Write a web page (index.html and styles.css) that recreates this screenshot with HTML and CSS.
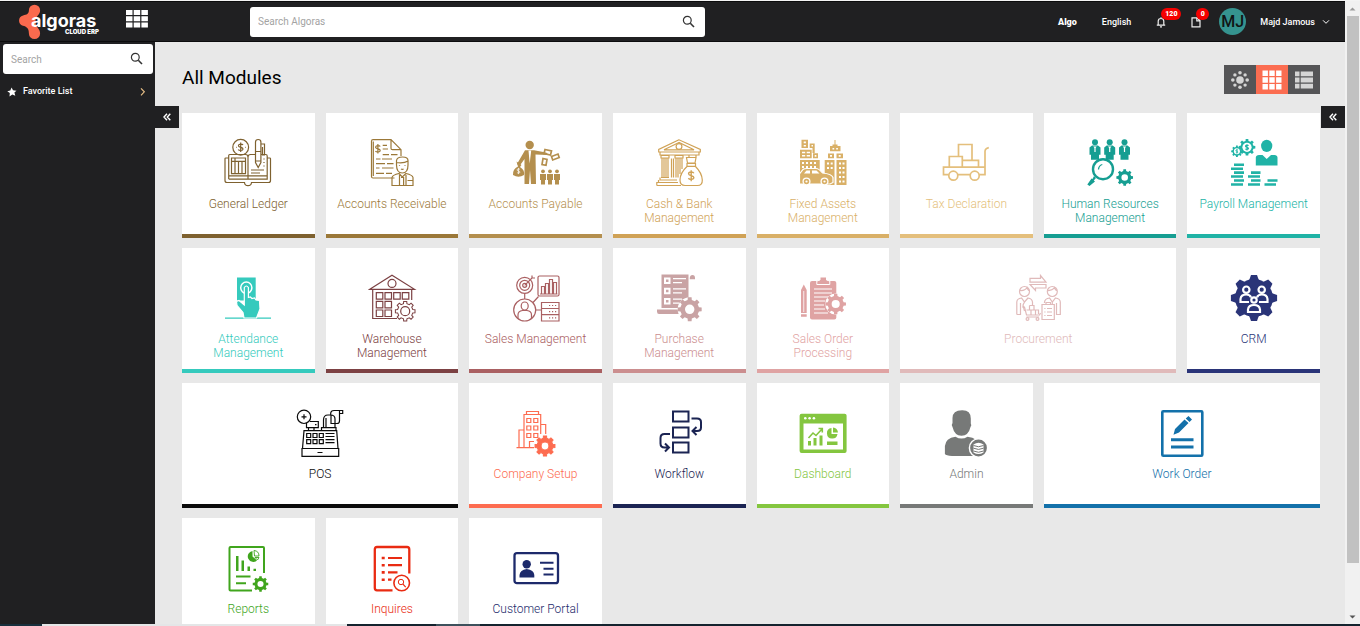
FILE: index.html
```html
<!DOCTYPE html>
<html lang="en">
<head>
<meta charset="utf-8">
<title>Algoras Cloud ERP</title>
<link rel="stylesheet" href="styles.css">
</head>
<body>
<svg class="defs" aria-hidden="true">
  <defs>
    <path id="gear-line" d="M8.8-2 11.4-1.8 11.4 1.8 8.8 2 7.6 4.8 9.3 6.8 6.8 9.3 4.8 7.6 2 8.8 1.8 11.4-1.8 11.4-2 8.8-4.8 7.6-6.8 9.3-9.3 6.8-7.6 4.8-8.8 2-11.4 1.8-11.4-1.8-8.8-2-7.6-4.8-9.3-6.8-6.8-9.3-4.8-7.6-2-8.8-1.8-11.4 1.8-11.4 2-8.8 4.8-7.6 6.8-9.3 9.3-6.8 7.6-4.8Z"/>
    <path id="gear" fill-rule="evenodd" d="M8.8-2 11.4-1.8 11.4 1.8 8.8 2 7.6 4.8 9.3 6.8 6.8 9.3 4.8 7.6 2 8.8 1.8 11.4-1.8 11.4-2 8.8-4.8 7.6-6.8 9.3-9.3 6.8-7.6 4.8-8.8 2-11.4 1.8-11.4-1.8-8.8-2-7.6-4.8-9.3-6.8-6.8-9.3-4.8-7.6-2-8.8-1.8-11.4 1.8-11.4 2-8.8 4.8-7.6 6.8-9.3 9.3-6.8 7.6-4.8ZM4.5 0A4.5 4.5 0 1 0-4.5 0 4.5 4.5 0 1 0 4.5 0Z"/>
    <path id="dollar" d="M2.3-2.2C1.6-3.7-2.3-3.7-2.3-1.6S2.3-.4 2.3 1.6-1.7 3.7-2.4 2.1M0-4.8V4.8"/>
  </defs>
</svg>
<div class="frame">
  <div class="app">
    <header class="topbar">
      <a class="logo" href="#" aria-label="Algoras Cloud ERP">
        <svg width="82" height="36" viewBox="0 0 82 36">
          <path fill="#fa6a4e" d="M16.500 .7a5.600 5.600 0 0 1 5.600 5.600c0 5-4.600 5.500-4.600 11.200s4.600 7 4.600 12a5.600 5.600 0 0 1-11.200 0c0-5.500-2.400-6.800-6-7.700a5.400 5.400 0 0 1 .2-10.400c3.600-.6 5.800-1.600 5.800-5.100a5.600 5.600 0 0 1 5.600-5.600Z"/>
          <text class="logo-name" x="13" y="23" fill="#fff">algoras</text>
          <text class="logo-sub" x="47" y="30" fill="#fff">CLOUD ERP</text>
        </svg>
      </a>
      <button class="apps" aria-label="Modules">
        <svg width="22" height="18" viewBox="0 0 22 18" fill="#fff"><path d="M0 0h6.500v5H0zM7.700 0h6.500v5H7.700zM15.400 0h6.500v5h-6.500zM0 6.300h6.500v5H0zM7.700 6.300h6.500v5H7.700zM15.400 6.300h6.500v5h-6.500zM0 12.600h6.500v5H0zM7.700 12.600h6.500v5H7.700zM15.400 12.600h6.500v5h-6.500z"/></svg>
      </button>
      <form class="search search-main">
        <input type="text" placeholder="Search Algoras" aria-label="Search Algoras">
        <button type="button" aria-label="Search"><svg width="14" height="14" viewBox="0 0 14 14" fill="none" stroke="#333" stroke-width="1.200"><circle cx="5.300" cy="5.300" r="3.900"/><path stroke-width="1.600" d="m8.300 8.300 3.700 3.700"/></svg></button>
      </form>
      <nav class="tools">
        <a class="algo" href="#">Algo</a>
        <a href="#">English</a>
        <button class="tool" aria-label="Notifications"><svg width="10" height="12" viewBox="0 0 10 12" fill="none" stroke="#eee" stroke-width="1.200"><path d="M.8 9.200h8.400M2.200 9V5.300a2.800 2.800 0 0 1 5.600 0V9M5 1.200v1.300M4 10.900h2"/></svg><span class="badge">120</span></button>
        <button class="tool" aria-label="Documents"><svg width="10" height="12" viewBox="0 0 10 12" fill="none" stroke="#eee" stroke-width="1.200"><path d="M1 1.800h5L9 4.600v6.200H1zM5.800 1.800v3H9"/></svg><span class="badge">0</span></button>
        <button class="user"><span class="avatar">MJ</span><span>Majd Jamous</span><svg width="8" height="6" viewBox="0 0 8 6" fill="none" stroke="#fff"><path d="m1 1.300 3 3 3-3"/></svg></button>
      </nav>
    </header>
    <div class="body">
      <aside class="sidebar">
        <form class="search">
          <input type="text" placeholder="Search" aria-label="Search menu">
          <button type="button" aria-label="Search"><svg width="14" height="14" viewBox="0 0 14 14" fill="none" stroke="#333" stroke-width="1.200"><circle cx="5.300" cy="5.300" r="3.900"/><path stroke-width="1.600" d="m8.300 8.300 3.700 3.700"/></svg></button>
        </form>
        <a class="favorite" href="#">
          <svg width="10" height="10" viewBox="0 0 10 10" fill="#fff"><path d="m4.600.5 1.400 2.700 3.500.5L7.400 5.600l.9 3.200-3-1.200-2.800 1.800.3-3.300L.3 4.200l3-.7z"/></svg>
          <span>Favorite List</span>
          <svg class="chev" width="6" height="10" viewBox="0 0 6 10" fill="none" stroke="#e5bd85" stroke-width="1.200"><path d="m1 1.300 3.300 3.500L1 8.300"/></svg>
        </a>
        <button class="fold fold-left" aria-label="Collapse menu"><svg width="8" height="8" viewBox="0 0 8 8" fill="none" stroke="#fff" stroke-width="1.400"><path d="M4 .7 1 4l3 3.300M7.300.7l-3 3.300 3 3.300"/></svg></button>
      </aside>
      <main class="content">
        <button class="fold fold-right" aria-label="Open panel"><svg width="8" height="8" viewBox="0 0 8 8" fill="none" stroke="#fff" stroke-width="1.400"><path d="M4 .7 1 4l3 3.300M7.300.7l-3 3.300 3 3.300"/></svg></button>
        <div class="heading">
          <h1>All Modules</h1>
          <div class="views">
            <button aria-label="Radial view"><svg width="20" height="20" viewBox="0 0 20 20" fill="#d5d5d5"><circle cx="10" cy="10" r="3.800"/><circle cx="10" cy="2.800" r="1.800"/><circle cx="10" cy="17.200" r="1.800"/><circle cx="2.800" cy="10" r="1.800"/><circle cx="17.200" cy="10" r="1.800"/><circle cx="4.900" cy="4.900" r="1.700"/><circle cx="15.100" cy="4.900" r="1.700"/><circle cx="4.900" cy="15.100" r="1.700"/><circle cx="15.100" cy="15.100" r="1.700"/></svg></button>
            <button class="active" aria-label="Grid view"><svg width="20" height="20" viewBox="0 0 20 20" fill="#fff"><path d="M.5.500h5.400v5.400H.5zM7.300.500h5.400v5.400H7.300zM14.100.500h5.400v5.400h-5.400zM.5 7.300h5.400v5.400H.5zM7.300 7.300h5.400v5.400H7.300zM14.100 7.300h5.400v5.400h-5.400zM.5 14.100h5.400v5.400H.5zM7.300 14.100h5.400v5.400H7.300zM14.100 14.100h5.400v5.400h-5.400z"/></svg></button>
            <button aria-label="List view"><svg width="20" height="20" viewBox="0 0 20 20" fill="#d5d5d5"><path d="M1 1.500h4.500v4.800H1zM6.700 1.500H19v4.800H6.700zM1 7.600h4.500v4.800H1zM6.700 7.600H19v4.800H6.700zM1 13.700h4.500v4.800H1zM6.700 13.700H19v4.800H6.700z"/></svg></button>
          </div>
        </div>
        <div class="grid">
          <a class="card c-ledger" href="#">
            <svg class="icon line" viewBox="0 0 48 48"><circle cx="16.700" cy="8.300" r="7.900"/><use href="#dollar" transform="translate(16.700 8.300)"/><path d="M12 8.300h.6M21 8.300h.6M4.700 19H1.800q-.8 0-.8.800V41.500q0 2 2 2H20.500q.3 3.200 3.500 3.200t3.500-3.200H44.500q2 0 2-2V19.800q0-.8-.8-.8H43M4.700 40V16.500q0-1 1-1H21.500q2.500 0 2.500 2.500V40M4.700 36.800H43.200M4.700 40.200H43.200V17q0-1.500-1.500-1.500H37M31 15.500H26.500Q24 15.500 24 18M7.500 19h14v15.700h-14zM7.500 22.300h14M11 19v15.700M14.500 22.300v12.400M18 22.300v12.400M27 31H40M27 34H36M40 19.500v1M40 23v1M40 26.500v1"/><path d="M31.500 3q0-2.500 2.700-2.500T36.900 3V23.500L34.200 28.500 31.500 23.500ZM31.500 12.500h5.400M31.500 22h5.400M36.900 5H40.500V16H38.500V8"/></svg>
            <span>General Ledger</span></a>
          <a class="card c-receivable" href="#">
            <svg class="icon line" viewBox="0 0 48 48"><path d="M26.500 39H5Q3.500 39 3.500 37.500V2.200Q3.500.7 5 .7H23L33 10.700V17M23 .7V9.200Q23 10.700 24.500 10.700H33M5.300 2.500V37"/><use href="#dollar" transform="translate(9.900 9.800)"/><path d="M14.700 6.300H19M14.700 10H20M14.700 15.700H21M23 15.700H29.500M8 20H12.500M14 20H24M8 24.700H17M19 24.700H25.500M8 29H11.500M14 29H25.500M8 34.300H16M18 34.300H24"/><path d="M28.500 26V21.500Q29 18 34.500 18T40 21.500V26Q40 34 34.300 34T28.500 26ZM28.500 23.500Q36 24.500 40 22M31.500 26v.8M37 26v.8M33 30q1.300.8 2.600 0M24 46.500V38.500Q24.500 36 31 34.500L34.300 38 38 34.500Q44.500 36 45 38.500V46.500ZM31.500 36V46M38 36V46M39.500 41.500H45M33 38.500h2.600V46"/></svg>
            <span>Accounts Receivable</span></a>
          <a class="card c-payable" href="#">
            <svg class="icon solid" viewBox="0 0 48 48"><circle cx="17.700" cy="6" r="4.200"/><path d="M13 11.300H22L34 13.500Q36 14.200 35.500 16L23.500 15.500 24 45H19L18 31 17 45H12.500V20L7.500 27 5 25Z"/><path class="cut" d="m16.500 11.500 1.200 13 1.500-13Z"/><path d="M4.500 22.500 9.500 26 8 28Q13 31 12 36 6.500 39.500 1 36 .5 30 6 27.500Z"/><g fill="none" stroke="#fff" stroke-width="1.100"><use href="#dollar" transform="translate(6.500 32) scale(.65)"/></g><g fill="none" stroke="currentColor" stroke-width="1.700"><path d="m33 10.500 6.500 1.500-1 4-6.500-1.500zM39.500 17.500l6.500-2.500 1.200 3.500-6.500 2.500zM31 19.500l4 .8-1 6-4-.8z"/></g><circle cx="31" cy="32.300" r="1.900"/><circle cx="38" cy="32.300" r="1.900"/><circle cx="45" cy="32.300" r="1.900"/><path d="M28 35h6v6h-1v4.500h-4V41h-1zM35 35h6v6h-1v4.500h-4V41h-1zM42 35h6v6h-1v4.500h-4V41h-1z"/></svg>
            <span>Accounts Payable</span></a>
          <a class="card c-cash" href="#">
            <svg class="icon line" viewBox="0 0 48 48"><path d="M24 .8 3.700 10.500V13H45.300V10.500ZM5 13V16H44V13M24 3.500 9 10.800H39Z"/><circle cx="24" cy="7.500" r="2.900"/><path d="M6 16.500H14V19H6ZM7 19V38.500M9 19V38.500M11 19V38.500M13 19V38.500M6 38.500H14M20 16.500H28V19H20ZM21 19V38.500M23 19V38.500M25 19V35M27 19V30M34 16v2M41 16v2M5 38.500V41H22M3.500 41V43.500H23M1.800 46.500H26M1.800 46.500V43.500H4M16.500 19.500V38.500M18.500 19.500V38.500"/><path class="paper" d="M31.500 18.500H41L40 24H32.500ZM32 24.500H40.500V27.300H32ZM32 27.500Q25 34 25 41 25 46.500 30 46.500H42.500Q47.500 46.500 47.300 41 47 34 40.500 27.500Z"/><use href="#dollar" transform="translate(36.200 36.700) scale(1.150)"/></svg>
            <span>Cash &amp; Bank Management</span></a>
          <a class="card c-assets" href="#">
            <svg class="icon solid" viewBox="0 0 48 48"><path d="M2.500.700H9V9H2.500zM10.700 4.500h5V14H13.500V9H10.700zM1 10.700H12.700V19.300H1zM14 14.300h5v5h-5zM1 21H20.700V33H1zM35.500 1h1V6h-1zM33.500 5.500h5V7h3v5.300H31V7h2.500zM29 14.500h6v4.800h-6zM37.500 14.500h6.500v4.800h-6.500zM25.700 21h9.800V46h-9.800zM37.500 21h10V46h-10z"/><path class="cut" d="M4.700 2.500h2.200v1.800H4.700zM4.700 6h2.200v1.500H4.700zM12.500 6h1.500v1.500h-1.500zM3 12.700h3.200v1.500H3zM7.700 12.700H11v1.500H7.700zM3 16h3.200v1.500H3zM7.700 16H11v1.500H7.700zM15.700 16h1.700v1.700h-1.700zM3 23h2v2H3zM7 23h2v2H7zM11 23h2v2h-2zM15 23h2v2h-2zM3 27h2v2H3zM7 27h2v2H7zM11 27h2v2h-2zM15 27h2v2h-2zM33.500 9h1.700v1.600h-1.700zM37.200 9h1.700v1.600h-1.700zM31 16h2v1.700h-2zM39.700 16h2v1.700h-2zM28 23.500h2v2h-2zM31.700 23.500h2v2h-2zM28 28h2v2h-2zM31.700 28h2v2h-2zM40 23.500h2v2h-2zM43.500 23.500h2v2h-2zM40 28h2v2h-2zM43.500 28h2v2h-2zM40 32.500h2v2h-2zM43.500 32.500h2v2h-2zM40 37h2v2h-2zM43.500 37h2v2h-2zM40 41.500h2v2h-2zM43.500 41.500h2v2h-2z"/><path stroke="#fff" stroke-width="1.200" d="M.5 35 4 30.500Q5 29.500 8 29.500H17Q20 29.500 23.500 34 33 35 34 38.500V43.500L31 45H.5Z"/><path class="cut" d="m5 34.500 2.500-3H11v3zM13 31.500h4.500l3 3H13z"/><circle cx="7.500" cy="42.500" r="3.400" stroke="#fff" stroke-width="1.300"/><circle cx="25.500" cy="42.500" r="3.400" stroke="#fff" stroke-width="1.300"/><circle class="cut" cx="7.500" cy="42.500" r="1.100"/><circle class="cut" cx="25.500" cy="42.500" r="1.100"/></svg>
            <span>Fixed Assets Management</span></a>
          <a class="card c-tax" href="#">
            <svg class="icon line bold" viewBox="0 0 48 48"><path d="M6.800 35.700H1.500V28.200H43V12.500Q43 9.500 46.800 8.700M43 28V35.700H37.200M15.800 35.700H28.200M7.300 28V17.500H20.300V28M16.500 17.500V5.500H30V21M20.300 21.300H36.500V28"/><circle cx="11.300" cy="36.700" r="4.500"/><circle cx="32.700" cy="36.700" r="4.500"/></svg>
            <span>Tax Declaration</span></a>
          <a class="card c-hr" href="#">
            <svg class="icon solid" viewBox="0 0 48 48"><circle cx="9" cy="3.300" r="3"/><circle cx="23.700" cy="3.300" r="3"/><circle cx="38.500" cy="3.300" r="3"/><path d="M6 6.500h6l2.500 2v7.300H13v5H5v-5H3.500V8.500zM20.700 6.500h6l2.500 2v7.300h-1.500v5h-8v-5h-1.500V8.500zM35.500 6.500h6l2.500 2v7.300h-1.500v5h-8v-5H33V8.500z"/><path class="cut" d="M7.300 7.500h3.400L9.600 9v4H8.400V9zM22 7.500h3.400L24.300 9v4h-1.200V9zM36.800 7.500h3.400L39.100 9v4h-1.200V9z"/><circle cx="17" cy="30.200" r="10" fill="#fff" stroke="currentColor" stroke-width="2.400"/><path d="M12.500 30.500q.3-4 3.800-5" fill="none" stroke="currentColor" stroke-width="1.300"/><path d="m8 37 2 2-2.200 2.500L9 42.500 3.500 47 1.300 45.500 5.500 39.500 6.500 40Z"/><use href="#gear" transform="translate(38.700 38.500) scale(.73)"/></svg>
            <span>Human Resources Management</span></a>
          <a class="card c-payroll" href="#">
            <svg class="icon solid" viewBox="0 0 48 48"><use href="#gear-line" transform="translate(6.900 12.300) scale(.5)"/><use href="#gear-line" transform="translate(17 8.300) scale(.73)"/><circle class="cut" cx="6.900" cy="12.300" r="3"/><circle class="cut" cx="17" cy="8.300" r="4.600"/><g fill="none" stroke="currentColor" stroke-width="1.800"><use href="#dollar" transform="translate(6.900 12.300) scale(.45)"/><use href="#dollar" transform="translate(17 8.300) scale(.65)"/></g><ellipse cx="36.700" cy="6.900" rx="5.600" ry="6.200"/><path d="M25.800 26.500V18.500Q26 16 29 16H32.500L36.700 20 41 16H44.500Q47.300 16 47.500 18.500V26.500Z"/><path d="M4 24.500h10v2.600H4zM1 28.500h12v2.600H1zM4 32.300h10v2.600H4zM1 36.200h12v2.600H1zM4 40.200h10v2.600H4zM1 44.200h12v2.600H1zM21 32.300h9.500v2.600H21zM18 36.200h12v2.600H18zM21 40.200h9.500v2.600H21zM18 44.200h12v2.600H18zM37.500 40.200h10v2.600h-10zM34.500 44.200H46v2.600H34.500z"/></svg>
            <span>Payroll Management</span></a>

          <a class="card c-attendance" href="#">
            <svg class="icon solid" viewBox="0 0 48 48"><path d="M13 3.500h18.700v23H13zM1 43.500h46v1.200H1z"/><circle cx="22.300" cy="13.700" r="5.600" fill="none" stroke="#fff" stroke-width="1.500"/><path stroke="#fff" stroke-width="1.200" d="M20.300 31V13.500Q22.300 10.500 24.400 13.500V23.500L26.300 23 28 24.500 30.500 24 32 26 35.500 26.500 36 35 32.500 44H20L19 38.500 13 31.500 12.500 27.500 15 26.500Z"/></svg>
            <span>Attendance Management</span></a>
          <a class="card c-warehouse" href="#">
            <svg class="icon line" viewBox="0 0 48 48"><path d="M1.800 15.300 24 1.300 46.500 15.300ZM4.700 15.300V44.500H29M43.700 15.300V26M8.300 18.700h6.500v6.500H8.300zM17 18.700h6.500v6.500H17zM25.700 18.700h6.500v6.500h-6.500zM34.300 18.700h6.500v6.500h-6.500zM8.300 27.300h6.500v6.500H8.300zM17 27.300h6.500v6.500H17zM8.300 36h6.500v6.500H8.300zM17 36h6.500v6.500H17z"/><circle cx="24" cy="9.400" r="4"/><circle cx="37.200" cy="37.200" r="4.500"/><use href="#gear-line" transform="translate(37.200 37.200) scale(.86)"/></svg>
            <span>Warehouse Management</span></a>
          <a class="card c-sales" href="#">
            <svg class="icon line" viewBox="0 0 48 48"><circle cx="12.700" cy="11.300" r="8"/><circle cx="12.700" cy="11.300" r="5"/><circle cx="12.700" cy="11.300" r="2"/><path d="M12.700 11.300 20 4V1.500M20 4H23M12.700 19.300V25M21 28.500 26.500 22.500M24 36H29.500"/><rect x="26" y="2" width="21" height="20" rx="1.500"/><path d="M28 20H45.500M29.500 20V12.500H32.500V20M33.500 20V9.500H36.500V20M37.500 20V5.500H40.500V20M41.500 20V8.500H44.500V20"/><circle cx="12.700" cy="36" r="11"/><ellipse cx="12.700" cy="32" rx="3.500" ry="4"/><path d="M6 44.500V41Q6 37 10.500 36.500H15Q19.500 37 19.500 41V44.500M29.500 28.500H47V47H29.500ZM29.500 34.500H47M29.500 40.700H47M37 31.500h1.200M40 31.500h1.200M43 31.500h1.200M37 37.600h1.200M40 37.600h1.200M43 37.600h1.200M37 43.800h1.200M40 43.800h1.200M43 43.800h1.200"/></svg>
            <span>Sales Management</span></a>
          <a class="card c-purchase" href="#">
            <svg class="icon solid" viewBox="0 0 48 48"><path d="M6.500.500H33.500V34H6.500zM34.800 5.300V4Q35 1 37.500 1T40 4V5.300ZM2 35.500H24V40H4Q2 40 2 37.500Z"/><path class="cut" d="M9 3.500h6.500V10H9zM9 13.800h6.500v6.500H9zM9 24h6.500v6.500H9zM18 4H31V5.200H18zM18 8H27V9.200H18zM18 14.300H31v1.200H18zM18 18.300H27v1.200H18zM18 24.500H27v1.200H18zM18 28.500H24v1.200H18z"/><path d="M11 5.500h2.500V8H11zM11 15.800h2.500v2.500H11zM11 26h2.500v2.500H11z"/><circle class="cut" cx="34.700" cy="35.300" r="12"/><use href="#gear" transform="translate(34.700 35.300) scale(1.050)"/></svg>
            <span>Purchase Management</span></a>
          <a class="card c-orders" href="#">
            <svg class="icon solid" viewBox="0 0 48 48"><rect x="11" y="7" width="26.300" height="38.500" rx="2"/><path stroke="#fff" stroke-width="1" d="M17.800 10.500V7L21 6V3H27.500V6L30.800 7V10.500Z"/><path class="cut" d="M15 14.500H33v1H15zM15 18.500H33v1H15zM15 22.500H29v1H15zM15 26.500H26v1H15zM15 30.500H25v1H15zM15 34.500H26v1H15zM15 38.500H29v1H15z"/><path d="M2 16 4.800 10.500 7.700 16V39H2zM2 40.200H7.700V42.700H2z"/><path class="cut" d="M4.400 17h.8v21h-.8z"/><circle class="cut" cx="36.700" cy="30" r="10.500"/><use href="#gear" transform="translate(36.700 30) scale(.9)"/></svg>
            <span>Sales Order Processing</span></a>
          <a class="card wide c-procurement" href="#">
            <svg class="icon line" viewBox="0 0 48 48"><path d="M16 4.300H26.500V1.500L32 8.200H16ZM32 14H21.500V16.500L16 10.500H32Z"/><circle cx="10.500" cy="17.500" r="5"/><path d="M5.800 16.500Q11 17 13 13.500 14 16.500 15.500 16.500"/><circle cx="38.300" cy="17.500" r="5"/><path d="M33.500 16.500Q38 17 40.500 13.500 41.500 16.500 43 16.500M2.800 40.500V28Q3 24.500 7.500 24L10.500 28 14 24Q18 24.500 18.500 28V32M2.800 40.500H6.500V29M10.500 28 9 31 10.500 37M30.500 29V28Q31 24.500 35.500 24L38.300 28 41.500 24Q46 24.500 46.300 28V40.500H42.500V29M38.300 28V30"/><path d="M8 33H10.500L12.500 41H25.500L26.500 39M12.500 43H25M12.500 36H17V41M17 36H21.500V41M21.500 36H24.500V40M15.500 31.500H20V36M15.500 31.500V36"/><circle cx="13.500" cy="45" r="1.400"/><circle cx="23.500" cy="45" r="1.400"/><path d="M28 30.500H40.300V45.500H28ZM32 30.500V28.500H36.500V30.500M30.300 34.500h1.200M33 34.500h5M30.300 38h1.200M33 38h5M30.300 41.500h1.200M33 41.500h5"/></svg>
            <span>Procurement</span></a>
          <a class="card c-crm" href="#">
            <svg class="icon solid" viewBox="0 0 48 48"><circle cx="24" cy="24" r="19"/><path id="tooth" d="M18.500 8 21 .9H27L29.500 8V40L27 47.100H21L18.500 40Z"/><use href="#tooth" transform="rotate(45 24 24)"/><use href="#tooth" transform="rotate(90 24 24)"/><use href="#tooth" transform="rotate(135 24 24)"/><g fill="none" stroke="#fff" stroke-width="2.200"><circle cx="16.300" cy="15.700" r="3.200"/><circle cx="31.700" cy="15.700" r="3.200"/><circle cx="24" cy="26" r="2.700"/><path d="M19 28H10.500V25Q11 20.500 16.300 20.500 20 20.500 21 23.500M29 28H37.500V25Q37 20.500 31.700 20.500 28 20.500 27 23.500M18 38V35.500Q18.500 31 24 31T30 35.500V38Z"/></g></svg>
            <span>CRM</span></a>

          <a class="card wide c-pos" href="#">
            <svg class="icon line" viewBox="0 0 48 48"><circle cx="8" cy="7.800" r="6.700"/><path d="M8 5.300V10.300M5.500 7.800H10.500M14 12.500H22.300V18.700H10.500V14M19 15.700h1.500M12.500 18.700V21.700M18 18.700V21.700M8 21.700H40.700L42 39.500H6.500ZM10.700 24.500h4v4h-4zM17 24.500h4v4h-4zM23.300 24.500h4v4h-4zM10.700 30.700h4v4h-4zM17 30.700h4v4h-4zM23.300 30.700h4v4h-4zM29.500 24.500h9M29.500 27.500h9M29.500 30.700h9M29.500 33.700h9M6 39.500H42.700V47.300H6ZM21.500 43.500H26.500M25.500 21.700V18.700H40V21.700M27.500 18.700V11Q27.500 6 32 6H34.500Q39 6 39 10V18.700M30 18.700V9M34.700 5.500V4Q35 1.500 38 1.500H46.700V4.500H43.500M43.500 2V12Q43.500 14.500 41 14.500H39M35 6V14.500H39"/></svg>
            <span>POS</span></a>
          <a class="card c-company" href="#">
            <svg class="icon line" viewBox="0 0 48 48"><path d="M12 38.700V5.500H28.700V25M14.500 5.500V2.500H26.500V5.500M4.500 38.700H22M7 38.700V21H12M28.700 15.500H33.700V25M14.800 9.500h4v4h-4zM21.800 9.500h4v4h-4zM14.800 17h4v4h-4zM21.800 17h4v4h-4zM14.800 24.500h4v4h-4zM21.800 24.500h4v4h-4zM17.500 38.700V32.500H22"/><use class="solid" href="#gear" transform="translate(33 37) scale(.87)"/></svg>
            <span>Company Setup</span></a>
          <a class="card c-workflow" href="#">
            <svg class="icon line heavy" viewBox="0 0 48 48"><path d="M18 2.500H33.500V12.500H18zM18 18.500H33.500V28.500H18zM18 33.500H33.500V43.500H18zM36.500 9.500H42Q46 9.500 46 13V18.500Q46 22 42 22H38M41.500 18 37.500 22 41.500 26M15 25H9.500Q5.500 25 5.500 29V34.500Q5.500 38.500 9.500 38.500H13.500M10 34.500 14 38.500 10 42.500"/></svg>
            <span>Workflow</span></a>
          <a class="card c-dashboard" href="#">
            <svg class="icon solid" viewBox="0 0 48 48"><rect x=".6" y="4.700" width="47" height="39.300" rx="2"/><path class="cut" d="M4.500 14.500H44V40.500H4.500z"/><circle class="cut" cx="6.300" cy="9.300" r="1.300"/><circle class="cut" cx="10.600" cy="9.300" r="1.300"/><circle class="cut" cx="14.900" cy="9.300" r="1.300"/><path d="M9 32h3v4.500H9zM14.500 29h3v7.500h-3zM20.500 26.500h3v10h-3zM28 32.500H38.500v3.500H28z"/><path fill="none" stroke="currentColor" stroke-width="1.600" d="m9.500 29 4.500-5 3 2.500 6-6.500M19.500 19.500H23.300V23.500"/><path d="M32.500 19A5.300 5.300 0 1 0 38.500 25H32.500ZM34 18.500V23.500H39Q38.500 19 34 18.500Z"/></svg>
            <span>Dashboard</span></a>
          <a class="card c-admin" href="#">
            <svg class="icon solid" viewBox="0 0 48 48"><path d="M10.500 9Q10.500 1.500 20 1.200 28.800 1 28.800 9.500V14.500Q30 16 28.500 18 26.500 26.700 19.500 26.700T10.500 18Q9 16 10.500 14ZM2.900 45V37Q3.500 29 13.500 27.700 19.500 31.500 25.500 27.700 36.500 29 37 37V47H10Q4 46.500 2.900 45Z"/><circle class="cut" cx="36.500" cy="39" r="9.800"/><circle cx="36.500" cy="39" r="8.400"/><path class="cut" d="M31.500 35.500Q36.500 32 41.500 35.500V43.500Q36.500 46.500 31.500 43.500Z"/><path fill="none" stroke="currentColor" stroke-width="1" d="M31.500 36.500Q36.500 39 41.500 36.500M31.500 39.200Q36.500 41.700 41.500 39.200M31.500 42Q36.500 44.500 41.500 42"/></svg>
            <span>Admin</span></a>
          <a class="card wide c-workorder" href="#">
            <svg class="icon solid" viewBox="0 0 48 48"><rect x="4.300" y="2.300" width="40" height="44.400" rx="1" fill="none" stroke="currentColor" stroke-width="2.600"/><path d="M15.500 25.800 17 20 26.500 10.500 30.500 14 21 23.500ZM27.700 9.500 30.500 7 34 10.500 31.500 13ZM13 29.300H35.500V32.300H13zM13 36.500H35.500V39.500H13z"/></svg>
            <span>Work Order</span></a>

          <a class="card c-reports" href="#">
            <svg class="icon solid" viewBox="0 0 48 48"><path fill="none" stroke="currentColor" stroke-width="2" d="M28 46.500H6.500Q5.500 46.500 5.500 45.500V4Q5.500 3 6.500 3H39Q40 3 40 4V29"/><path d="M12 12h2.500v15H12zM17.500 16.500H20V27h-2.500zM23.500 22.500H26V27h-2.500zM29.500 24.800H32V27h-2.500zM12 31.500H26.500v2H12zM12 38.300H22v2H12zM28.500 7A5.500 5.500 0 1 0 33 16.500L28.500 12.500Z"/><path fill="none" stroke="currentColor" stroke-width=".9" d="M30 6.500Q35 7 35 12H30.500ZM31 13.500H35L33.500 16Z"/><use href="#gear" transform="translate(36.500 40) scale(.68)"/></svg>
            <span>Reports</span></a>
          <a class="card c-inquires" href="#">
            <svg class="icon solid" viewBox="0 0 48 48"><path fill="none" stroke="currentColor" stroke-width="2.300" d="M24.500 46.300H9Q6.800 46.300 6.800 44V5.500Q6.800 3 9 3H39Q41.300 3 41.300 5.500V29.500"/><path d="M13.700 12.700h3v2.600h-3zM13.700 19.900h3v2.600h-3zM13.700 27.100h3v2.600h-3zM13.700 34.400h3V37h-3zM20 12.900H34v2.200H20zM20 20.100H34v2.200H20zM20 27.300H29.500v2.200H20zM20 34.600h3.500v2.200H20z"/><circle cx="33.700" cy="39" r="7.800" fill="none" stroke="currentColor" stroke-width="1.600"/><circle cx="33" cy="38" r="2.700" fill="none" stroke="currentColor"/><path fill="none" stroke="currentColor" stroke-width="1.200" d="m35 40.200 2.700 3"/></svg>
            <span>Inquires</span></a>
          <a class="card c-portal" href="#">
            <svg class="icon solid" viewBox="0 0 48 48"><rect x="2.500" y="9.200" width="43.500" height="30" rx="2.500" fill="none" stroke="currentColor" stroke-width="2.300"/><circle cx="14.700" cy="20.200" r="4.200"/><path d="M7.500 33.500V31Q8 26 14.700 25 22 26 22.300 31V33.500ZM28 17.700H41.500V19.700H28zM31.500 23.700H41.500V25.700H31.500zM31.500 29.500H41.500V31.500H31.500z"/></svg>
            <span>Customer Portal</span></a>
        </div>
      </main>
    </div>
  </div>
  <div class="scrollbar"><svg width="15" height="14" viewBox="0 0 15 14" fill="#9a9a9a"><path d="m4.500 9.500 3-3 3 3z"/></svg><div class="thumb"></div><svg width="15" height="14" viewBox="0 0 15 14" fill="#555"><path d="m4.500 5.500 3 3 3-3z"/></svg></div>
</div>
<footer class="taskbar"></footer>
</body>
</html>
```
FILE: styles.css
```css
* { box-sizing: border-box; }
html, body { height: 100%; }
body {
  margin: 0;
  display: flex;
  flex-direction: column;
  overflow: hidden;
  border-top: 1px solid #f4f4f4;
  font-family: Roboto, "Liberation Sans", sans-serif;
  font-size: 9px;
  color: #111;
  background: #e8e8e8;
}
a { color: inherit; text-decoration: none; }
button { border: 0; padding: 0; background: none; color: inherit; font: inherit; cursor: pointer; }
svg { display: block; flex: none; }
.defs { position: absolute; width: 0; height: 0; }

.frame { flex: 1; min-height: 0; display: flex; }
.app { flex: 1; min-width: 0; display: flex; flex-direction: column; }

.topbar {
  flex: none;
  height: 41px;
  display: flex;
  align-items: center;
  padding: 0 15px 0 18px;
  background: #202022;
  border: solid #0c0c0d;
  border-width: 1px 0;
  color: #fff;
  font-weight: 500;
}
.logo-name { font: 700 18px Inter, sans-serif; }
.logo-sub { font: 900 6px Inter, sans-serif; }
.apps { margin: 0 102px 6px 26px; }
.search {
  display: flex;
  align-items: center;
  height: 30px;
  padding: 0 9px 0 8px;
  border-radius: 3px;
  background: #fff;
}
.search-main { flex: 0 1 455px; }
.search input {
  flex: 1;
  min-width: 0;
  border: 0;
  padding: 0;
  outline: 0;
  background: none;
  font: 10px Roboto, sans-serif;
}
.search input::placeholder { color: #a3a3a3; opacity: 1; }

.tools { margin-left: auto; display: flex; align-items: center; gap: 25px; }
.algo { font-weight: 900; }
.tool { position: relative; }
.badge {
  position: absolute;
  left: 5px;
  bottom: 8px;
  min-width: 13px;
  padding: 0 4px;
  border-radius: 6px;
  background: #f50000;
  font-size: 7px;
  font-weight: 900;
  line-height: 12px;
}
.user { display: flex; align-items: center; margin-left: -7px; gap: 14px; }
.user svg { margin-left: -7px; }
.avatar {
  width: 27px;
  height: 27px;
  border-radius: 50%;
  background: #35938f;
  color: #101414;
  font-size: 16px;
  line-height: 27px;
}

.body { flex: 1; min-height: 0; display: flex; }
.sidebar {
  position: relative;
  z-index: 1;
  flex: none;
  width: 155px;
  padding: 2px 2px 0 3px;
  background: #202022;
  color: #fff;
}
.favorite {
  display: flex;
  align-items: center;
  gap: 6px;
  margin-top: 10px;
  padding: 0 7px 0 4px;
  line-height: 15px;
  font-weight: 500;
}
.chev { margin-left: auto; }
.fold {
  position: absolute;
  top: 64px;
  display: grid;
  place-items: center;
  width: 24px;
  height: 22px;
  background: #202022;
}
.fold-left { left: 100%; }
.fold-right { right: 0; }

.content {
  position: relative;
  flex: 1;
  min-width: 0;
  overflow: hidden;
  padding: 23px 25px 0 27px;
}
.heading { display: flex; justify-content: space-between; margin-bottom: 19px; }
h1 { margin: 0; font-size: 19px; font-weight: 400; line-height: 26px; color: #000; }
.views { display: flex; background: #555557; }
.views button { display: grid; place-items: center; width: 32px; height: 29px; }
.views .active { background: #fb6d51; }

.grid {
  display: grid;
  grid-template-columns: repeat(8, 1fr);
  grid-auto-rows: 125px;
  gap: 10px 11px;
}
.card {
  display: flex;
  flex-direction: column;
  align-items: center;
  gap: 10px;
  padding: 26px 8px 0;
  background: #fff;
  border-bottom: 4px solid currentColor;
  color: var(--accent);
  font-size: 12px;
  font-weight: 300;
  line-height: 14px;
  text-align: center;
}
.card span { max-width: 116px; }
.wide { grid-column: span 2; }
.icon { width: 48px; height: 48px; overflow: visible; }
.line { fill: none; stroke: currentColor; stroke-width: 1.2; }
.bold { stroke-width: 1.7; }
.heavy { stroke-width: 2; }
.solid { fill: currentColor; }
.cut, .paper { fill: #fff; }

.c-ledger { --accent: #7e612f; }
.c-receivable { --accent: #9b7838; }
.c-payable { --accent: #b48f4e; }
.c-cash { --accent: #d0a256; }
.c-assets { --accent: #d9b067; }
.c-tax { --accent: #e4bf7c; }
.c-hr { --accent: #169e92; }
.c-payroll { --accent: #20b3a6; }
.c-attendance { --accent: #35cabd; }
.c-warehouse { --accent: #7c4143; }
.c-sales { --accent: #aa6062; }
.c-purchase { --accent: #cb8e8f; }
.c-purchase .icon { color: #c9a3a4; }
.c-orders { --accent: #dfa3a3; }
.c-procurement { --accent: #e0baba; }
.c-crm { --accent: #2a3478; }
.c-pos { --accent: #0b0b0b; }
.c-company { --accent: #fd6c50; }
.c-workflow { --accent: #1b2453; }
.c-dashboard { --accent: #84c63f; }
.c-admin { --accent: #777978; }
.c-workorder { --accent: #1371aa; }
.c-reports { --accent: #40a51d; }
.c-inquires { --accent: #e92b12; }
.c-portal { --accent: #1d2a6b; }

.scrollbar {
  flex: none;
  width: 15px;
  display: flex;
  flex-direction: column;
  background: #f1f1f1;
}
.thumb { flex: 0 1 547px; margin: 1px 1px auto 2px; background: #c1c1c1; }
.taskbar {
  flex: none;
  height: 2px;
  background: linear-gradient(90deg, #18303d 42px, #e4e6e7 42px 347px, #14232e 347px 436px, #3e515c 436px 480px, #14232e 480px);
}
```
